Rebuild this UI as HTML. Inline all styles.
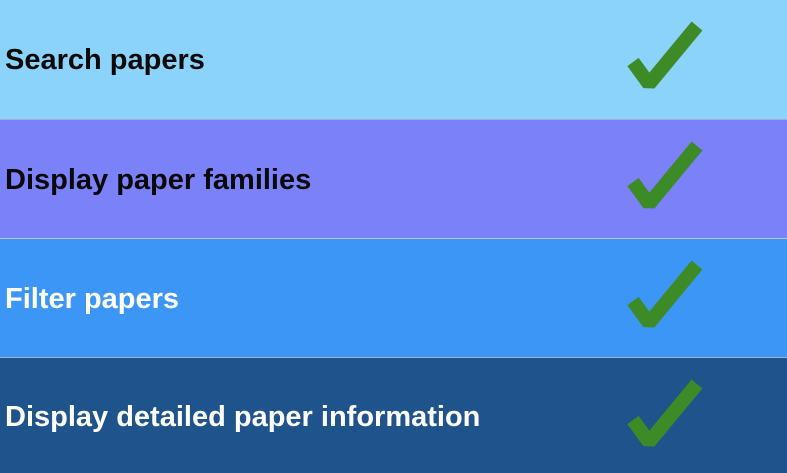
<html><head><style>
body{margin:0;width:787px;height:472px;overflow:hidden;font-family:"Liberation Sans",sans-serif}
.r{position:absolute;left:0;width:787px;height:119px}
.t{position:absolute;left:5px;top:44px;font-size:29px;font-weight:bold;letter-spacing:0}
svg{position:absolute;left:618px;top:14px}
</style></head><body>
<div class="r" style="top:0;background:#8bd3fb"><div class="t" style="color:#0a0a0a">Search papers</div><svg width="90" height="85"><path d="M15 48 L31 70 L79 12" fill="none" stroke="#3d8b26" stroke-width="14" stroke-linejoin="bevel"/></svg></div>
<div class="r" style="top:119px;background:#7b81f9;border-top:1px solid #a9a9dd"><div class="t" style="color:#0a0a0a">Display paper families</div><svg width="90" height="85"><path d="M15 48 L31 70 L79 12" fill="none" stroke="#3d8b26" stroke-width="14" stroke-linejoin="bevel"/></svg></div>
<div class="r" style="top:238px;background:#3c96f6;border-top:1px solid #b0c4e8"><div class="t" style="color:#fff">Filter papers</div><svg width="90" height="85"><path d="M15 48 L31 70 L79 12" fill="none" stroke="#3d8b26" stroke-width="14" stroke-linejoin="bevel"/></svg></div>
<div class="r" style="top:357px;height:115px;background:#1e538b;border-top:1px solid #9fb4cf"><div class="t" style="color:#fff;top:43px">Display detailed paper information</div><svg width="90" height="85"><path d="M15 48 L31 70 L79 12" fill="none" stroke="#3d8b26" stroke-width="14" stroke-linejoin="bevel"/></svg></div>
</body></html>
